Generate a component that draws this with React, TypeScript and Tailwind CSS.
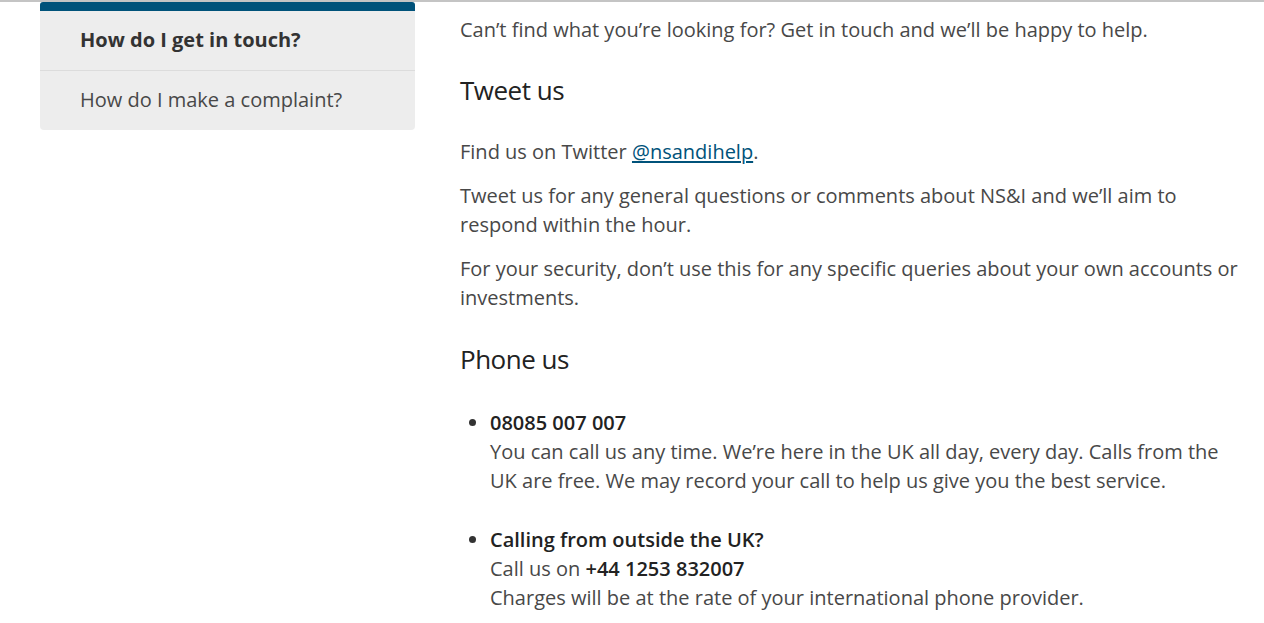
import React from "react";

const font = { fontFamily: '"Open Sans", "Noto Sans", sans-serif' };

const SideNav: React.FC = () => (
  <nav className="w-[375px] shrink-0">
    <div className="h-[9px] bg-[#00527a] rounded-t-[3px]" />
    <ul className="bg-[#ededed] rounded-b-[4px]">
      <li className="h-[60px] flex items-center pl-10 pb-[2px] border-b border-[#dcdcdc] text-[20px] font-bold text-[#333]">
        How do I get in touch?
      </li>
      <li className="h-[59px] flex items-center pl-10 pb-[2px] text-[20px] text-[#484848]">
        How do I make a complaint?
      </li>
    </ul>
  </nav>
);

const App: React.FC = () => (
  <div className="min-h-screen bg-white border-t-[2px] border-[#c4c4c4]" style={font}>
    <div className="flex pl-10 pr-[22px]">
      <SideNav />
      <main className="pl-[45px] pt-[13px] text-[20px] leading-[29px] text-[#484848]">
        <p>Can’t find what you’re looking for? Get in touch and we’ll be happy to help.</p>

        <h2 className="text-[26px] leading-[36px] text-[#222] mt-[28px] mb-[29px] tracking-[-0.5px]">Tweet us</h2>
        <p>
          Find us on Twitter{" "}
          <a href="#" className="text-[#00527a] underline underline-offset-2">
            @nsandihelp
          </a>
          .
        </p>
        <p className="mt-[15px]">
          Tweet us for any general questions or comments about NS&amp;I and we’ll aim to respond within the hour.
        </p>
        <p className="mt-[15px]">
          For your security, don’t use this for any specific queries about your own accounts or investments.
        </p>

        <h2 className="text-[26px] leading-[36px] text-[#222] mt-[29px] mb-[31px] tracking-[-0.5px]">Phone us</h2>
        <ul className="list-disc pl-[30px] marker:text-[#333]">
          <li>
            <strong className="font-semibold text-[#222]">08085 007 007</strong>
            <br />
            You can call us any time. We’re here in the UK all day, every day. Calls from the UK are free. We may record
            your call to help us give you the best service.
          </li>
          <li className="mt-[30px]">
            <strong className="font-semibold text-[#222]">Calling from outside the UK?</strong>
            <br />
            Call us on <strong className="font-semibold text-[#222]">+44 1253 832007</strong>
            <br />
            Charges will be at the rate of your international phone provider.
          </li>
        </ul>
      </main>
    </div>
  </div>
);

export default App;
